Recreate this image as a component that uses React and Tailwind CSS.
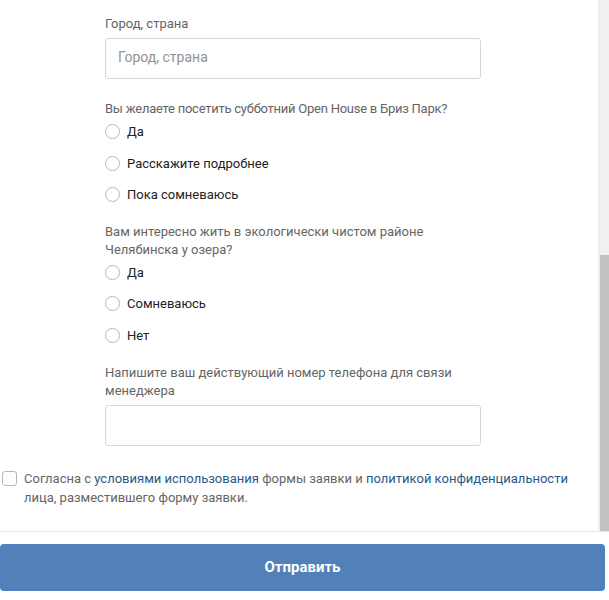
import React, { useState } from "react";

const Radio = ({ label, checked, onClick }) => (
    <div onClick={onClick} className="flex items-center h-[31.5px] cursor-pointer">
        <span className="w-[15px] h-[15px] rounded-full border border-[#b2b8bf] bg-white flex items-center justify-center">
            {checked && <span className="w-[7px] h-[7px] rounded-full bg-[#5181b8]" />}
        </span>
        <span className="ml-[7px] text-[13px] text-[#222222]">{label}</span>
    </div>
)

function Question({ title, options, className, titleClass = "" }) {
    const [value, setValue] = useState(null)

    return (
        <div className={className}>
            <p className={"text-[13px] leading-[18px] text-[#656565] " + titleClass}>{title}</p>
            <div className="flex flex-col mt-[-2px]">
                {options.map((opt) => (
                    <Radio key={opt} label={opt} checked={value === opt} onClick={() => setValue(opt)} />
                ))}
            </div>
        </div>
    )
}

export default function App() {
    const [agree, setAgree] = useState(false)

    return (
        <div className="w-[609px] h-[600px] bg-white font-['Roboto',sans-serif] overflow-hidden">
            <div className="flex h-[531px]">
                <div className="flex-1 overflow-hidden">
                    <div className="pl-[105px] pt-[15px] w-[481px]">
                        <div>
                            <p className="text-[13px] leading-[18px] text-[#656565]">Город, страна</p>
                            <input
                                type="text"
                                placeholder="Город, страна"
                                className="mt-[5px] w-full h-[41px] px-[12px] pb-[3px] border border-[#d3d9de] rounded-[3px] text-[14px] text-[#222] placeholder:text-[#929292] outline-none"
                            />
                        </div>

                        <Question
                            className="mt-[21px]"
                            titleClass="tracking-[-0.25px]"
                            title="Вы желаете посетить субботний Open House в Бриз Парк?"
                            options={["Да", "Расскажите подробнее", "Пока сомневаюсь"]}
                        />

                        <Question
                            className="mt-[12px]"
                            title="Вам интересно жить в экологически чистом районе Челябинска у озера?"
                            options={["Да", "Сомневаюсь", "Нет"]}
                        />

                        <div className="mt-[13px]">
                            <p className="text-[13px] leading-[18px] text-[#656565]">
                                Напишите ваш действующий номер телефона для связи менеджера
                            </p>
                            <input
                                type="text"
                                className="mt-[5px] w-full h-[41px] px-[12px] border border-[#d3d9de] rounded-[3px] text-[14px] text-[#222] outline-none"
                            />
                        </div>
                    </div>

                    {/* consent checkbox */}
                    <div className="flex items-start pl-[2px] mt-[23px] pr-[20px]">
                        <span
                            onClick={() => setAgree(!agree)}
                            className="mt-[2px] shrink-0 w-[15px] h-[15px] rounded-[3px] border border-[#b2b8bf] bg-white flex items-center justify-center cursor-pointer">
                            {agree && <span className="text-[10px] text-[#5181b8] leading-none">✓</span>}
                        </span>
                        <p className="ml-[7px] text-[13px] leading-[19px] text-[#656565]">
                            Согласна с <span className="text-[#2a5885]">условиями использования</span> формы заявки и{" "}
                            <span className="text-[#2a5885]">политикой конфиденциальности</span> лица, разместившего форму заявки.
                        </p>
                    </div>
                </div>

                {/* scrollbar */}
                <div className="w-[11px] bg-[#f1f1f1] border-l border-[#e9e9e9] flex flex-col">
                    <div className="h-[255px]" />
                    <div className="flex-1 bg-[#c1c1c1] ml-[1px]" />
                </div>
            </div>

            <div className="border-t border-[#e7e8ec]" />

            <div className="pt-[12px]">
                <button className="w-[605px] h-[47px] bg-[#5181b8] hover:bg-[#5b88bd] rounded-[4px] text-white text-[15px] font-bold">
                    Отправить
                </button>
            </div>
        </div>
    )
}
